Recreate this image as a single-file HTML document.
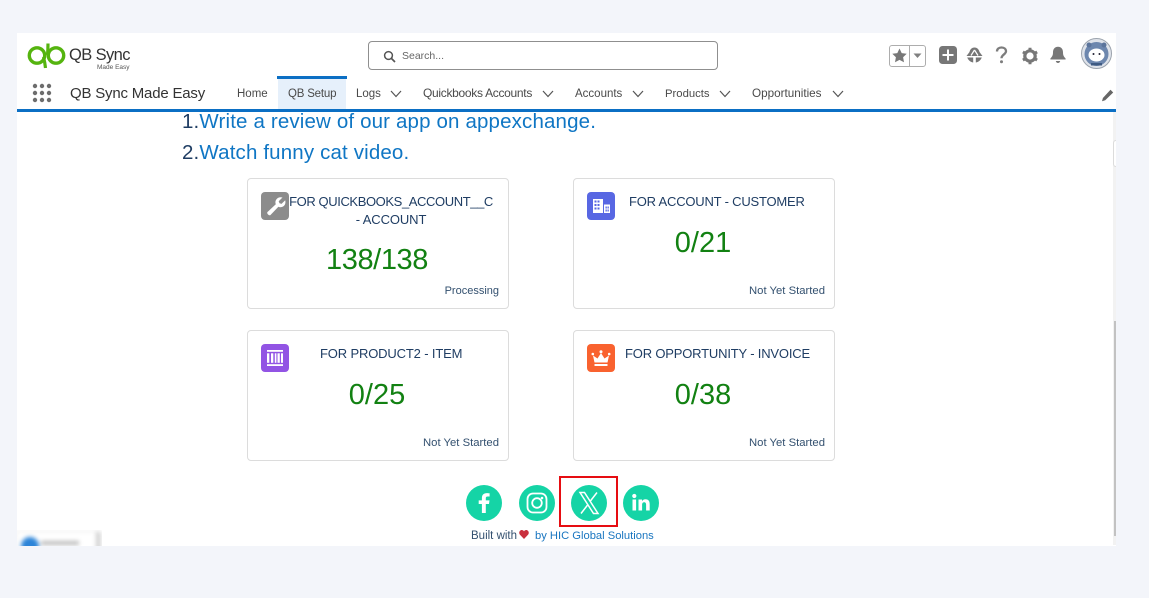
<!DOCTYPE html>
<html lang="en">
<head>
<meta charset="utf-8">
<title>QB Sync Made Easy</title>
<style>
html,body{margin:0;padding:0;background:#f3f5fa}
body{width:1149px;height:598px;position:relative;overflow:hidden;font-family:"Liberation Sans",sans-serif;filter:blur(.35px)}
.a{position:absolute;white-space:nowrap}
#app{position:absolute;left:17px;top:33px;width:1099px;height:513px;background:#fff}
.nav{font-size:11.5px;color:#4a4a4a;top:87px;line-height:14px}
.card{position:absolute;width:260px;height:129px;border:1px solid #dcdcdc;border-radius:4px;background:#fff}
.ic{position:absolute;left:13px;top:13px;width:28px;height:28px;border-radius:4px}
.ic svg{display:block}
.t{position:absolute;font-size:13px;line-height:18px;color:#1f3d63;text-align:center;white-space:nowrap;top:14px}
.n{position:absolute;font-size:29px;line-height:34px;color:#128112;text-align:center;white-space:nowrap;left:-1px;width:260px}
.s{position:absolute;right:9px;top:105px;font-size:11.3px;line-height:14px;color:#33506f;white-space:nowrap}
.so{position:absolute;width:36px;height:36px;border-radius:50%;background:#15d4a6;top:485px}
.so svg{display:block}
</style>
</head>
<body>
<div id="app"></div>

<!-- logo -->
<svg class="a" style="left:27px;top:42px" width="40" height="30" viewBox="0 0 40 30">
<circle cx="10" cy="13.500" r="7.700" fill="none" stroke="#55b40f" stroke-width="3.400"/>
<circle cx="29" cy="13.500" r="7.700" fill="none" stroke="#55b40f" stroke-width="3.400"/>
<path d="M16.500 15 Q18 21 18.500 26" fill="none" stroke="#55b40f" stroke-width="3.200"/>
<path d="M21 1.500 Q21 8 20.500 13" fill="none" stroke="#55b40f" stroke-width="3.200"/>
</svg>
<div class="a" style="left:69px;top:44px;font-size:16.500px;line-height:22px;color:#333;letter-spacing:-.6px">QB Sync</div>
<div class="a" style="left:97px;top:64px;font-size:6.500px;line-height:7px;color:#555">Made Easy</div>

<!-- search -->
<div class="a" style="left:368px;top:41px;width:348px;height:27px;border:1px solid #8f8f8f;border-radius:4px;background:#fff"></div>
<svg class="a" style="left:383px;top:50px" width="13" height="13" viewBox="0 0 13 13"><circle cx="5.500" cy="5.500" r="3.900" fill="none" stroke="#555" stroke-width="1.500"/><path d="M8.500 8.500L12 12" stroke="#555" stroke-width="1.700"/></svg>
<div class="a" style="left:402px;top:49px;font-size:10.500px;line-height:14px;color:#666">Search...</div>

<!-- right header icons -->
<div class="a" style="left:889px;top:45px;width:35px;height:20px;border:1px solid #adadad;border-radius:3px"></div>
<div class="a" style="left:909px;top:45px;width:1px;height:21px;background:#adadad"></div>
<svg class="a" style="left:891px;top:47px" width="17" height="17" viewBox="0 0 17 17"><path d="M8.500 1.500l2.200 4.600 5 .7-3.600 3.500.9 5-4.500-2.400-4.500 2.400.9-5L1.300 6.800l5-.7z" fill="#777"/></svg>
<svg class="a" style="left:913px;top:53px" width="9" height="6" viewBox="0 0 9 6"><path d="M.5 .5h8L4.500 5z" fill="#808080"/></svg>
<svg class="a" style="left:939px;top:46px" width="18" height="18" viewBox="0 0 18 18"><rect width="18" height="18" rx="3.500" fill="#777"/><path d="M9 3.500v11M3.500 9h11" stroke="#fff" stroke-width="2"/></svg>
<svg class="a" style="left:966px;top:47px" width="17" height="17" viewBox="0 0 17 17"><path d="M8.500 .5C11.500 .5 13 2.700 13.500 5L16.500 9H.5L3.500 5C4 2.700 5.500 .5 8.500 .5zM1.200 10.500h6v5C4.200 15 2.200 13 1.200 10.500zM9.800 10.500h6c-1 2.500-3 4.500-6 5z" fill="#777"/><path d="M8.500 3L5 8.500M8.500 3L12 8.500" stroke="#fff" stroke-width="1.200" fill="none"/></svg>
<svg class="a" style="left:995px;top:46px" width="13" height="18" viewBox="0 0 13 18" fill="none"><path d="M2 5.500C2 3 4 1.500 6.500 1.500S11 3 11 5.300c0 3-4.500 3.400-4.500 7" stroke="#7d7d7d" stroke-width="2.300"/><circle cx="6.500" cy="15.700" r="1.500" fill="#7d7d7d"/></svg>
<svg class="a" style="left:1021px;top:47px" width="18" height="18" viewBox="0 0 18 18"><circle cx="9" cy="9" r="5.200" fill="none" stroke="#777" stroke-width="3.200"/><path d="M9 .8v3M9 14.200v3M1.900 4.900l2.600 1.500M13.500 11.600l2.600 1.500M1.900 13.100l2.600-1.500M13.500 6.400l2.600-1.500" stroke="#777" stroke-width="3"/></svg>
<svg class="a" style="left:1049px;top:46px" width="18" height="18" viewBox="0 0 18 18"><path d="M9 .8c3.500 0 5 2.700 5 5.500 0 3.500 1 4.500 2.600 6.200v1H1.400v-1C3 10.800 4 9.800 4 6.300 4 3.500 5.500.8 9 .8z" fill="#777"/><path d="M6.800 15h4.400c-.3 1.300-1.100 2-2.200 2s-1.900-.7-2.200-2z" fill="#777"/></svg>
<svg class="a" style="left:1081px;top:38px" width="31" height="31" viewBox="0 0 31 31">
<circle cx="15.500" cy="15.500" r="15" fill="#dfe3ea" stroke="#9ba3ad"/>
<circle cx="15.500" cy="16" r="12" fill="#6d87ae"/>
<circle cx="8" cy="7" r="2.500" fill="#5b749b"/><circle cx="23" cy="7" r="2.500" fill="#5b749b"/>
<ellipse cx="15.500" cy="17" rx="8" ry="6.500" fill="#fff"/>
<circle cx="12.500" cy="16" r="1" fill="#223"/><circle cx="18.500" cy="16" r="1" fill="#223"/>
<path d="M10 25h11v2.500H10z" fill="#3e5a82"/>
</svg>

<!-- nav bar -->
<svg class="a" style="left:32px;top:83px" width="20" height="20" viewBox="0 0 20 20" fill="#6d6d6d">
<circle cx="3" cy="3" r="2.200"/><circle cx="10" cy="3" r="2.200"/><circle cx="17" cy="3" r="2.200"/>
<circle cx="3" cy="10" r="2.200"/><circle cx="10" cy="10" r="2.200"/><circle cx="17" cy="10" r="2.200"/>
<circle cx="3" cy="17" r="2.200"/><circle cx="10" cy="17" r="2.200"/><circle cx="17" cy="17" r="2.200"/>
</svg>
<div class="a" style="left:70px;top:84px;font-size:15px;line-height:20px;color:#333;letter-spacing:-.2px">QB Sync Made Easy</div>

<div class="a" style="left:278px;top:77px;width:68px;height:33px;background:#e6f0fb"></div>
<div class="a" style="left:277px;top:76px;width:70px;height:3px;background:#0b6fc4"></div>
<div class="a nav" style="left:237px">Home</div>
<div class="a nav" style="left:288px;letter-spacing:-.2px">QB Setup</div>
<div class="a nav" style="left:356px">Logs</div>
<div class="a nav" style="left:423px;top:86px;font-size:12px;letter-spacing:-.3px">Quickbooks Accounts</div>
<div class="a nav" style="left:575px">Accounts</div>
<div class="a nav" style="left:665px;font-size:11.300px">Products</div>
<div class="a nav" style="left:752px;font-size:11.700px">Opportunities</div>
<svg class="a" style="left:0;top:0" width="1149" height="110" fill="none" stroke="#555" stroke-width="1.200">
<path d="M391 91l5 5.500 5-5.500M543 91l5 5.500 5-5.500M633 91l5 5.500 5-5.500M720 91l5 5.500 5-5.500M833 91l5 5.500 5-5.500"/>
</svg>
<svg class="a" style="left:1101px;top:89px" width="13" height="13" viewBox="0 0 13 13"><path d="M9.500 .8l2.700 2.700L4.200 11.300 1 12.300l.9-3.300z" fill="#666"/></svg>

<!-- heading lines -->
<div class="a" style="left:182px;top:109px;font-size:20.500px;line-height:26px;color:#0f76c4;letter-spacing:.15px"><span style="color:#1f3d63">1.</span>Write a review of our app on appexchange.</div>
<div class="a" style="left:182px;top:140px;font-size:20.500px;line-height:26px;color:#0f76c4;letter-spacing:.15px"><span style="color:#1f3d63">2.</span>Watch funny cat video.</div>
<div class="a" style="left:17px;top:109px;width:1099px;height:3px;background:#0b6fc4"></div>

<!-- cards -->
<div class="card" style="left:247px;top:178px">
  <div class="ic" style="background:#8c8c8c"><svg width="28" height="28" viewBox="0 0 28 28"><path d="M21.500 5.500l-3.800 3.700.8 2 2 .7 3.700-3.700c.7 2.900-.2 5-2 6.200-1.500 1-3.300 1.100-4.800.4L9.500 23c-1.200 1.200-4.300-1.600-3-3l8.300-7.800c-.7-1.700-.5-3.500.7-5 1.400-1.800 3.700-2.400 6-1.700z" fill="#fff"/></svg></div>
  <div class="t" style="left:41px;width:204px;letter-spacing:-.4px">FOR QUICKBOOKS_ACCOUNT__C<br><span style="letter-spacing:-.1px">- ACCOUNT</span></div>
  <div class="n" style="top:64px;letter-spacing:-.4px">138/138</div>
  <div class="s" style="font-size:11px">Processing</div>
</div>
<div class="card" style="left:573px;top:178px">
  <div class="ic" style="background:#5867e3"><svg width="28" height="28" viewBox="0 0 28 28" fill="#fff"><path fill-rule="evenodd" d="M6 7h10v14H6zM7.500 8.500v2h2v-2zm3 0v2h2v-2zm-3 3.500v2h2v-2zm3 0v2h2v-2zm-3 3.500v2h2v-2zm3 0v2h2v-2z"/><path fill-rule="evenodd" d="M17 12.500h6V21h-6zM18.500 14.500v2h1.300v-2zm2 0v2h1.300v-2zm-2 3v2h1.300v-2zm2 0v2h1.300v-2z"/></svg></div>
  <div class="t" style="left:55px;letter-spacing:-.2px">FOR ACCOUNT - CUSTOMER</div>
  <div class="n" style="top:47px">0/21</div>
  <div class="s">Not Yet Started</div>
</div>
<div class="card" style="left:247px;top:330px">
  <div class="ic" style="background:#9254e4"><svg width="28" height="28" viewBox="0 0 28 28" fill="#fff"><rect x="6" y="6" width="16" height="1.800"/><rect x="6" y="20.200" width="16" height="1.800"/><rect x="6" y="9.300" width="2.300" height="9.500"/><rect x="10" y="9.300" width="2.300" height="9.500"/><rect x="13.800" y="9.300" width="1.600" height="9.500"/><rect x="16.500" y="9.300" width="2.300" height="9.500"/><rect x="20" y="9.300" width="2" height="9.500"/></svg></div>
  <div class="t" style="left:72px;letter-spacing:-.15px">FOR PRODUCT2 - ITEM</div>
  <div class="n" style="top:47px">0/25</div>
  <div class="s">Not Yet Started</div>
</div>
<div class="card" style="left:573px;top:330px">
  <div class="ic" style="background:#f9622f"><svg width="28" height="28" viewBox="0 0 28 28" fill="#fff"><path d="M6 11.500l4.500 3L14 9l3.500 5.500 4.500-3-1.500 7h-13z"/><circle cx="14" cy="7.800" r="1.500"/><circle cx="5.800" cy="10" r="1.300"/><circle cx="22.200" cy="10" r="1.300"/><rect x="7.500" y="20" width="13" height="2"/></svg></div>
  <div class="t" style="left:51px;letter-spacing:-.18px">FOR OPPORTUNITY - INVOICE</div>
  <div class="n" style="top:47px">0/38</div>
  <div class="s">Not Yet Started</div>
</div>

<!-- social -->
<div class="so" style="left:466px"><svg width="36" height="36" viewBox="0 0 36 36"><path d="M19.800 28v-9h3.200l.5-3.600h-3.700v-2.200c0-1 .4-1.700 1.800-1.700h2V8.300c-.4 0-1.500-.2-2.900-.2-2.900 0-4.800 1.700-4.800 4.800v2.500h-3.200V19h3.200v9z" fill="#fff"/></svg></div>
<div class="so" style="left:518.500px"><svg width="36" height="36" viewBox="0 0 36 36" fill="none" stroke="#fff"><rect x="8.500" y="8.500" width="19" height="19" rx="5.500" stroke-width="1.800"/><circle cx="18" cy="18" r="4.800" stroke-width="1.800"/><circle cx="23" cy="13" r=".8" fill="#fff"/></svg></div>
<div class="so" style="left:571px"><svg width="36" height="36" viewBox="0 0 36 36" fill="none" stroke="#fff"><path d="M9 7.500h4.500L27 28.500h-4.500z" stroke-width="1.500"/><path d="M26 7.500L19 16.500M17 19.500L10 28.500" stroke-width="1.500"/></svg></div>
<div class="so" style="left:623px"><svg width="36" height="36" viewBox="0 0 36 36" fill="#fff"><rect x="9.500" y="14.500" width="3.600" height="11"/><circle cx="11.300" cy="11" r="2.100"/><path d="M15.500 14.500H19v1.600c.7-1.100 1.900-1.900 3.500-1.900 3 0 4.200 1.900 4.200 5v6.300h-3.600v-5.600c0-1.500-.5-2.600-1.900-2.600-1.500 0-2.100 1.100-2.100 2.600v5.600h-3.600z"/></svg></div>
<div class="a" style="left:559px;top:476px;width:55px;height:47px;border:2.500px solid #e60d12"></div>

<div class="a" style="left:471px;top:529px;font-size:11.500px;line-height:14px;color:#33506f">Built with</div>
<svg class="a" style="left:519px;top:530px" width="10" height="9" viewBox="0 0 11 10"><path d="M5.500 10L.9 5.200C-.8 3 .8 0 3.100 0c1 0 1.900.6 2.400 1.500C6 .6 6.900 0 7.900 0c2.300 0 3.900 3 2.200 5.200z" fill="#c9303e"/></svg>
<div class="a" style="left:535px;top:529px;font-size:11.200px;line-height:14px;color:#1a76c0">by HIC Global Solutions</div>

<!-- scrollbar -->
<div class="a" style="left:1113px;top:112px;width:3px;height:433px;background:#f2f2f2"></div>
<div class="a" style="left:1114px;top:321px;width:2px;height:215px;background:#c2c2c2"></div>
<div class="a" style="left:1113px;top:140px;width:3px;height:27px;background:#fff;border:1px solid #dcdcdc;border-right:0;box-sizing:border-box;border-radius:3px 0 0 3px"></div>

<!-- recaptcha blur -->
<div class="a" style="left:17px;top:530px;width:85px;height:16px;overflow:hidden">
  <div style="position:absolute;left:-4px;top:0;width:96px;height:26px;filter:blur(2px)">
    <div style="position:absolute;left:4px;top:2px;width:79px;height:24px;background:#fff;border-right:4px solid #cfcfcf;box-shadow:0 0 3px #ccc"></div>
    <div style="position:absolute;left:8px;top:7px;width:18px;height:18px;border-radius:50%;background:#2c84d8"></div>
    <div style="position:absolute;left:28px;top:11px;width:38px;height:4px;background:#bbb"></div>
  </div>
</div>
</body>
</html>
